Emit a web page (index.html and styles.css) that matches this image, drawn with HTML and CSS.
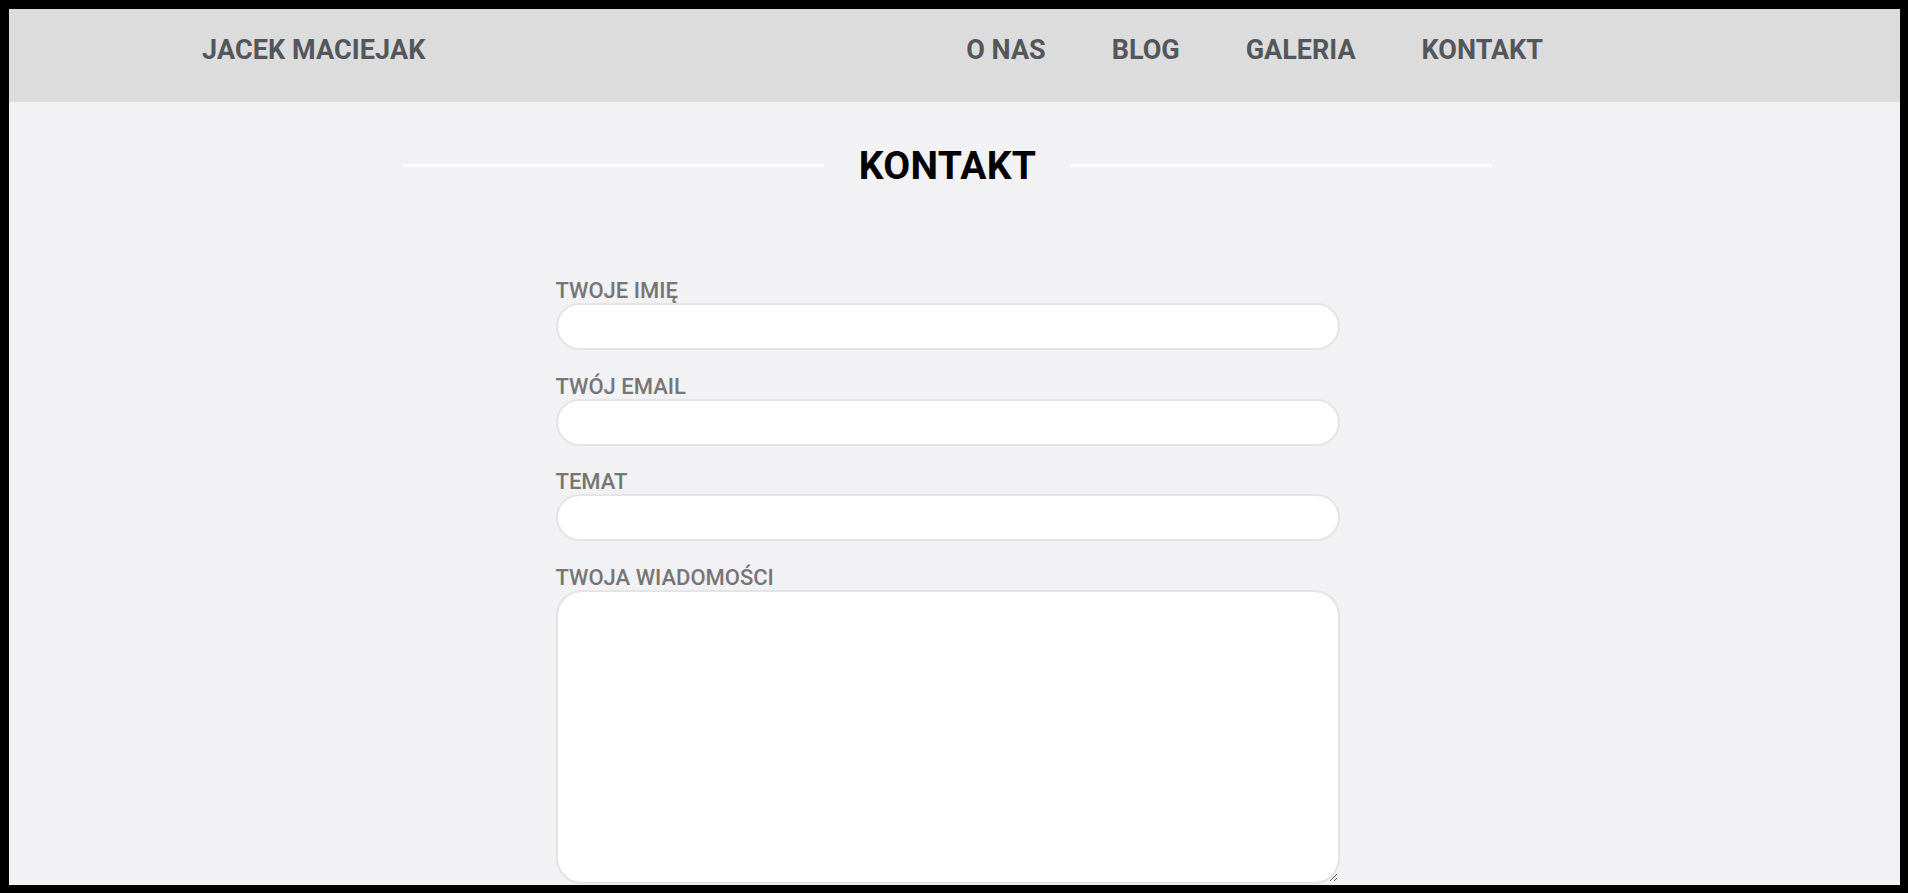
FILE: index.html
```html
<!DOCTYPE html>
<html lang="pl">
<head>
<meta charset="utf-8">
<title>Kontakt – Jacek Maciejak</title>
<link rel="stylesheet" href="styles.css">
</head>
<body>
<div class="frame">
  <header class="site-header">
    <div class="logo">JACEK MACIEJAK</div>
    <nav class="nav">
      <a href="#">O NAS</a>
      <a href="#">BLOG</a>
      <a href="#">GALERIA</a>
      <a href="#">KONTAKT</a>
    </nav>
  </header>
  <main class="main">
    <div class="title-row">
      <span class="rule"></span>
      <h1 class="title">KONTAKT</h1>
      <span class="rule"></span>
    </div>
    <form class="form">
      <label class="field">
        <span class="label">TWOJE IMIĘ</span>
        <input class="input" type="text">
      </label>
      <label class="field">
        <span class="label">TWÓJ EMAIL</span>
        <input class="input" type="email">
      </label>
      <label class="field">
        <span class="label">TEMAT</span>
        <input class="input" type="text">
      </label>
      <label class="field">
        <span class="label">TWOJA WIADOMOŚCI</span>
        <textarea class="textarea"></textarea>
      </label>
    </form>
  </main>
</div>
</body>
</html>
```

FILE: styles.css
```css
html, body {
  margin: 0;
  padding: 0;
  background: #000;
  height: 100%;
}
body {
  font-family: Roboto, "Liberation Sans", sans-serif;
}
.frame {
  margin: 9px 8px 0 9px;
  height: 876px;
  overflow: hidden;
  background: #f2f1f3;
  display: flex;
  flex-direction: column;
}
.site-header {
  background: #dcdcdc;
  height: 93px;
  box-sizing: border-box;
  padding: 25px 357px 0 193px;
  display: flex;
  justify-content: space-between;
  align-items: flex-start;
  flex-shrink: 0;
}
.logo {
  font-size: 27px;
  line-height: 32px;
  font-weight: 700;
  color: #53565a;
  letter-spacing: 0.1px;
}
.nav {
  display: flex;
  gap: 66px;
}
.nav a {
  font-size: 27px;
  line-height: 32px;
  font-weight: 700;
  color: #53565a;
  text-decoration: none;
}
.main {
  padding: 41px 14px 0 0;
  display: flex;
  flex-direction: column;
  align-items: center;
}
.title-row {
  width: 1089px;
  display: flex;
  align-items: center;
  gap: 35px;
}
.rule {
  flex: 1;
  height: 3px;
  background: #ffffff;
  margin-top: -3px;
}
.title {
  margin: 0;
  font-size: 39px;
  line-height: 47px;
  font-weight: 700;
  color: #000;
  letter-spacing: 0.3px;
}
.form {
  width: 784px;
  margin-top: 89px;
  display: flex;
  flex-direction: column;
  gap: 24.5px;
}
.field {
  display: flex;
  flex-direction: column;
}
.label {
  font-size: 22px;
  line-height: 24px;
  font-weight: 500;
  color: #767676;
}
.input {
  height: 47px;
  box-sizing: border-box;
  border: 2px solid #e4e3e5;
  border-radius: 24px;
  background: #fff;
  outline: none;
  padding: 0 20px;
  font-family: inherit;
  font-size: 18px;
}
.textarea {
  height: 294px;
  box-sizing: border-box;
  border: 2px solid #e4e3e5;
  border-radius: 26px;
  background: #fff;
  outline: none;
  padding: 12px 20px;
  font-family: inherit;
  font-size: 18px;
  resize: vertical;
}
```
